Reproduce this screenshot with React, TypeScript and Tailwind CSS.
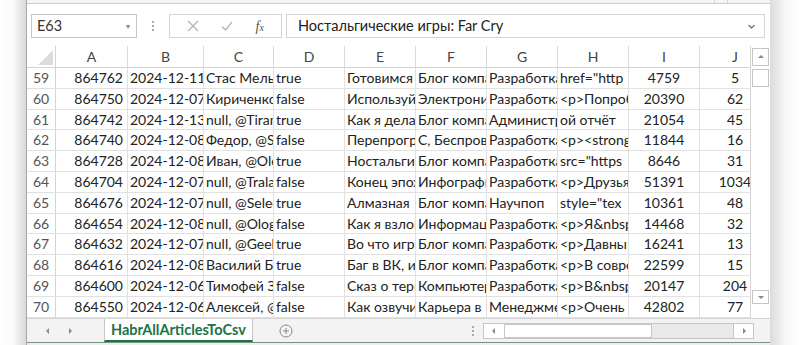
import React from 'react'

const font = { fontFamily: 'Lato, "Open Sans", sans-serif' }

const widths = [72, 76, 70, 71, 71, 71, 71, 71, 71, 71]
const letters = ['A', 'B', 'C', 'D', 'E', 'F', 'G', 'H', 'I', 'J']
const aligns = [
  'text-right pr-[4px]',
  'text-left pl-[2px]',
  'text-left pl-[2px]',
  'text-left pl-[2px]',
  'text-left pl-[2px]',
  'text-left pl-[2px]',
  'text-left pl-[2px]',
  'text-left pl-[2px]',
  'text-center',
  'text-center',
]

const rows: string[][] = [
  ['59', '864762', '2024-12-11T12', 'Стас Мельник', 'true', 'Готовимся к', 'Блог компан', 'Разработка', 'href="http', '4759', '5'],
  ['60', '864750', '2024-12-07T10', 'Кириченко', 'false', 'Используйте', 'Электроника', 'Разработка', '<p>Попроб', '20390', '62'],
  ['61', '864742', '2024-12-13T09', 'null, @Tiram', 'true', 'Как я делал', 'Блог компан', 'Администр', 'ой отчёт', '21054', '45'],
  ['62', '864740', '2024-12-08T11', 'Федор, @Sf', 'false', 'Перепрогр', 'С, Беспровод', 'Разработка', '<p><strong', '11844', '16'],
  ['63', '864728', '2024-12-08T15', 'Иван, @Ole', 'true', 'Ностальгические игры: Far Cry', 'Блог компан', 'Разработка', 'src="https', '8646', '31'],
  ['64', '864704', '2024-12-07T08', 'null, @Trala', 'false', 'Конец эпох', 'Инфографика', 'Разработка', '<p>Друзья', '51391', '1034'],
  ['65', '864676', '2024-12-07T14', 'null, @Selec', 'true', 'Алмазная', 'Блог компан', 'Научпоп', 'style="tex', '10361', '48'],
  ['66', '864654', '2024-12-08T16', 'null, @Olog', 'false', 'Как я взлом', 'Информаци', 'Разработка', '<p>Я&nbsp', '14468', '32'],
  ['67', '864632', '2024-12-07T13', 'null, @Geek', 'true', 'Во что игра', 'Блог компан', 'Разработка', '<p>Давны', '16241', '13'],
  ['68', '864616', '2024-12-08T17', 'Василий Бо', 'true', 'Баг в ВК, и', 'Блог компан', 'Разработка', '<p>В совре', '22599', '15'],
  ['69', '864600', '2024-12-06T12', 'Тимофей З', 'false', 'Сказ о терм', 'Компьютер', 'Разработка', '<p>В&nbsp', '20147', '204'],
  ['70', '864550', '2024-12-06T10', 'Алексей, @', 'false', 'Как озвучи', 'Карьера в IT', 'Менеджмен', '<p>Очень', '42802', '77'],
]

function Chevron({ dir }: { dir: 'up' | 'down' | 'left' | 'right' }) {
  const d =
    dir === 'up' ? 'M1 5 L4 2 L7 5 Z' : dir === 'down' ? 'M1 3 L4 6 L7 3 Z' : dir === 'left' ? 'M5 1 L2 4 L5 7 Z' : 'M3 1 L6 4 L3 7 Z'
  return (
    <svg width="8" height="8" viewBox="0 0 8 8">
      <path d={d} fill="#8a8a8a" />
    </svg>
  )
}

export default function App() {
  return (
    <div className="w-[800px] h-[345px] bg-white flex overflow-hidden text-[#222]" style={font}>
      <div className="w-[26px] h-full bg-gradient-to-r from-white via-[#fbfbfb] to-[#d9d9d9]" />

      <div className="w-[744px] h-full flex flex-col border-l border-[#a8a8a8] bg-white">
        {/* ribbon edge */}
        <div className="h-[4px] bg-[#f4f4f4] border-b border-[#cfcfcf] flex justify-end pr-[42px]">
          <div className="w-[14px] border-x border-[#d6d6d6]" />
        </div>

        {/* formula bar */}
        <div className="h-[42px] flex items-start pt-[10px] pl-[4px] pr-[5px] text-[14.5px]">
          <div className="w-[106px] h-[24px] border border-[#c6c6c6] flex items-center justify-between pl-[5px] pr-[6px]">
            <span className="text-[#333]">E63</span>
            <span className="text-[#888] text-[8px]">▾</span>
          </div>
          <div className="w-[32px] h-[24px] flex flex-col items-center justify-center gap-[2px]">
            <div className="w-[2px] h-[2px] bg-[#aaa]" />
            <div className="w-[2px] h-[2px] bg-[#aaa]" />
            <div className="w-[2px] h-[2px] bg-[#aaa]" />
          </div>
          <div className="w-[113px] h-[24px] border border-[#d4d4d4] flex items-center justify-around px-[6px]">
            <svg width="12" height="12" viewBox="0 0 12 12">
              <path d="M1 1 L11 11 M11 1 L1 11" stroke="#b5b5b5" strokeWidth="1.3" />
            </svg>
            <svg width="12" height="12" viewBox="0 0 12 12">
              <path d="M1 6.5 L4.5 10 L11 2" stroke="#b5b5b5" strokeWidth="1.3" fill="none" />
            </svg>
            <span className="italic text-[#555] text-[14px]" style={{ fontFamily: '"Liberation Serif", serif' }}>
              f<span className="text-[10px]">x</span>
            </span>
          </div>
          <div className="ml-[4px] flex-1 h-[24px] border border-[#d4d4d4] flex items-center justify-between pl-[11px] pr-[8px]">
            <span className="text-[#222]">Ностальгические игры: Far Cry</span>
            <svg width="9" height="9" viewBox="0 0 9 9">
              <path d="M1.5 3 L4.5 6 L7.5 3" stroke="#777" strokeWidth="1.3" fill="none" />
            </svg>
          </div>
        </div>

        {/* grid + vertical scrollbar */}
        <div className="flex h-[272px]">
          <div className="w-[724px] overflow-hidden text-[14px]">
            <div className="flex h-[22px] border-b border-[#d4d4d4] text-[#444]">
              <div className="w-[29px] shrink-0 border-r border-[#d4d4d4] flex items-end justify-end pr-[2px] pb-[2px]">
                <svg width="15" height="15" viewBox="0 0 15 15">
                  <path d="M15 0 L15 15 L0 15 Z" fill="#dcdcdc" />
                </svg>
              </div>
              {letters.map((l, i) => (
                <div
                  key={l}
                  className="shrink-0 border-r border-[#dadada] flex items-center justify-center"
                  style={{ width: widths[i] }}
                >
                  {l}
                </div>
              ))}
            </div>
            {rows.map((r) => (
              <div key={r[0]} className="flex h-[20.8px] border-b border-[#e1e1e1]">
                <div className="w-[29px] shrink-0 border-r border-[#d4d4d4] text-center text-[#555] leading-[20px]">
                  {r[0]}
                </div>
                {r.slice(1).map((c, i) => (
                  <div
                    key={i}
                    className={`shrink-0 border-r border-[#e1e1e1] overflow-hidden whitespace-nowrap leading-[20px] ${aligns[i]}`}
                    style={{ width: widths[i] }}
                  >
                    {c}
                  </div>
                ))}
              </div>
            ))}
          </div>
          <div className="w-[20px] border-l border-[#d4d4d4] flex flex-col items-center pt-[2px] pb-[2px]">
            <div className="w-[17px] h-[18px] border border-[#c6c6c6] flex items-center justify-center">
              <Chevron dir="up" />
            </div>
            <div className="w-[17px] h-[18px] mt-[3px] border border-[#c6c6c6] bg-white" />
            <div className="flex-1" />
            <div className="w-[17px] h-[14px] mb-[12px] border border-[#c6c6c6] flex items-center justify-center">
              <Chevron dir="down" />
            </div>
          </div>
        </div>

        {/* sheet tabs */}
        <div className="h-[24px] flex items-stretch bg-[#f3f3f3] border-t border-[#d4d4d4]">
          <div className="w-[77px] flex items-center gap-[14px] pl-[17px]">
            <Chevron dir="left" />
            <Chevron dir="right" />
          </div>
          <div className="w-[149px] bg-white border-x border-[#c6c6c6] border-b-[2px] border-b-[#217346] flex items-center justify-center text-[#217346] font-bold text-[14.5px]">
            HabrAllArticlesToCsv
          </div>
          <div className="w-[66px] flex items-center justify-center">
            <svg width="14" height="14" viewBox="0 0 14 14">
              <circle cx="7" cy="7" r="6" stroke="#8a8a8a" fill="none" strokeWidth="1" />
              <path d="M7 4 V10 M4 7 H10" stroke="#8a8a8a" strokeWidth="1" />
            </svg>
          </div>
          <div className="w-[164px] flex items-center justify-end pr-[9px]">
            <div className="flex flex-col gap-[2px]">
              <div className="w-[2px] h-[2px] bg-[#aaa]" />
              <div className="w-[2px] h-[2px] bg-[#aaa]" />
              <div className="w-[2px] h-[2px] bg-[#aaa]" />
            </div>
          </div>
          <div className="w-[271px] flex items-center">
            <div className="w-full h-[16px] flex bg-[#e9e9e9] border border-[#c6c6c6]">
              <div className="w-[20px] flex items-center justify-center bg-white">
                <Chevron dir="left" />
              </div>
              <div className="w-[148px] bg-white border border-[#c6c6c6]" />
              <div className="flex-1" />
              <div className="w-[20px] flex items-center justify-center bg-white border-l border-[#c6c6c6]">
                <Chevron dir="right" />
              </div>
            </div>
          </div>
        </div>
        <div className="h-[1px] bg-[#6f9a80]" />
        <div className="h-[2px] bg-[#eeeeee]" />
      </div>

      <div className="w-[30px] h-full bg-gradient-to-r from-[#dcdcdc] via-[#f6f6f6] to-white" />
    </div>
  )
}
